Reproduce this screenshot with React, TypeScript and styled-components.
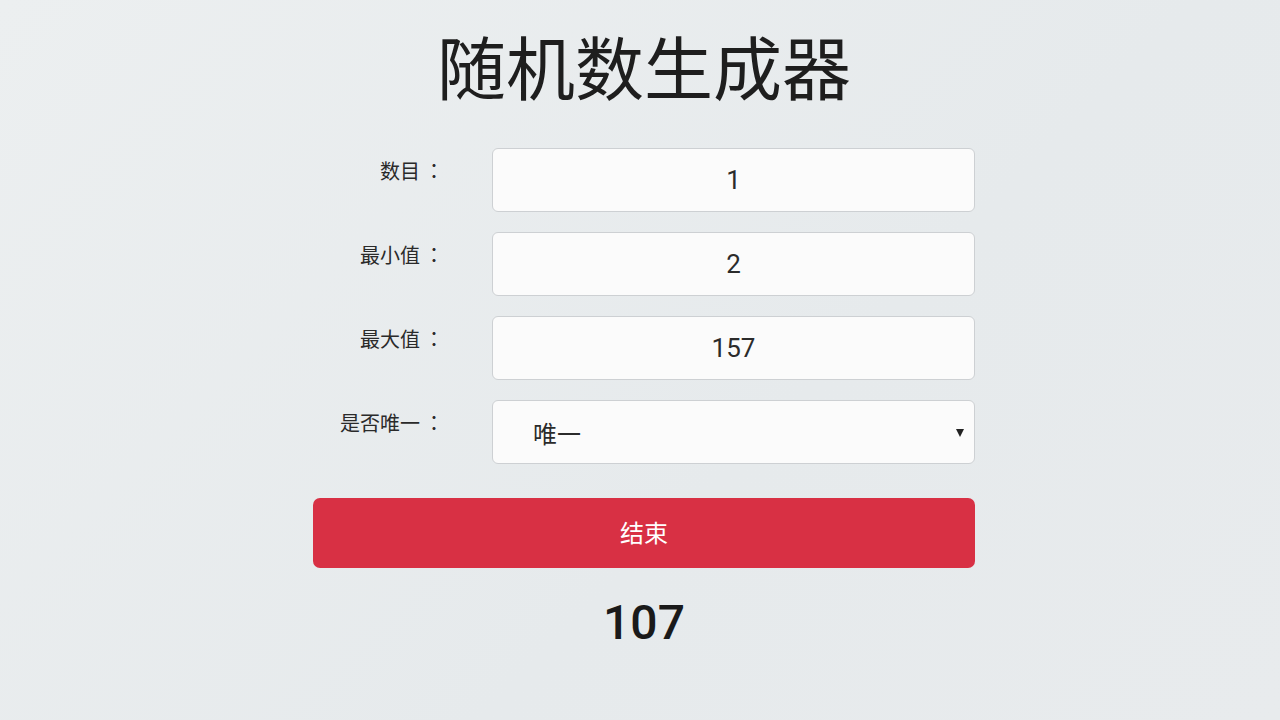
import React from "react";
import styled, { createGlobalStyle } from "styled-components";

const GlobalStyle = createGlobalStyle`
  html, body {
    margin: 0;
    padding: 0;
    height: 100%;
  }
  body {
    background: linear-gradient(135deg, #eceff0 0%, #e6eaec 60%, #e8ebed 100%);
    font-family: "Noto Sans CJK SC", "Noto Sans", Roboto, sans-serif;
    color: #222;
  }
  #root {
    min-height: 720px;
  }
`;

const Page = styled.div`
  min-height: 720px;
  padding: 24px 0 0 8px;
  box-sizing: border-box;
`;

const Title = styled.h1`
  margin: 0;
  text-align: center;
  font-size: 69px;
  line-height: 82px;
  font-weight: 400;
  color: #1e1e1e;
`;

const Card = styled.div`
  width: 662px;
  margin: 42px auto 0;
  display: flex;
  flex-direction: column;
`;

const Form = styled.div`
  display: grid;
  grid-template-columns: 179px 483px;
  grid-auto-rows: 64px;
  row-gap: 20px;
`;

const Label = styled.label`
  align-self: start;
  padding: 8px 48px 0 0;
  text-align: right;
  font-size: 20px;
  line-height: 30px;
  color: #2a2a2a;
  white-space: nowrap;
`;

const Colon = styled.span`
  font-family: "Noto Sans CJK JP", sans-serif;
  padding-left: 4px;
`;

const Field = styled.div`
  box-sizing: border-box;
  height: 64px;
  background: #fbfbfb;
  border: 1px solid #cdd0d3;
  border-radius: 6px;
  display: flex;
  align-items: center;
  font-size: 26px;
  color: #2b2b2b;
  font-family: Roboto, "Noto Sans CJK SC", sans-serif;
`;

const NumberField = styled(Field)`
  justify-content: center;
`;

const SelectField = styled(Field)`
  justify-content: space-between;
  padding: 0 10px 0 40px;
  font-size: 24px;
  font-family: "Noto Sans CJK SC", sans-serif;
`;

const Caret = styled.span`
  width: 0;
  height: 0;
  border-left: 4px solid transparent;
  border-right: 4px solid transparent;
  border-top: 8px solid #222;
  margin-top: 2px;
`;

const Button = styled.button`
  margin-top: 34px;
  height: 70px;
  padding: 0 0 4px;
  border: none;
  border-radius: 7px;
  background: #d83044;
  color: #ffffff;
  font-size: 24px;
  font-family: "Noto Sans CJK SC", sans-serif;
  cursor: pointer;
`;

const Result = styled.div`
  margin-top: 26px;
  text-align: center;
  font-family: Roboto, "Noto Sans", sans-serif;
  font-size: 48px;
  font-weight: 500;
  line-height: 58px;
  color: #1a1a1a;
`;

const labels = ["数目", "最小值", "最大值"];
const values = ["1", "2", "157"];

export default function App() {
  return (
    <>
      <GlobalStyle />
      <Page>
        <Title>随机数生成器</Title>
        <Card>
          <Form>
            {labels.map((l, i) => (
              <React.Fragment key={l}>
                <Label>
                  {l}
                  <Colon>：</Colon>
                </Label>
                <NumberField>{values[i]}</NumberField>
              </React.Fragment>
            ))}
            <Label>
              是否唯一<Colon>：</Colon>
            </Label>
            <SelectField>
              <span>唯一</span>
              <Caret />
            </SelectField>
          </Form>
          <Button>结束</Button>
          <Result>107</Result>
        </Card>
      </Page>
    </>
  );
}
